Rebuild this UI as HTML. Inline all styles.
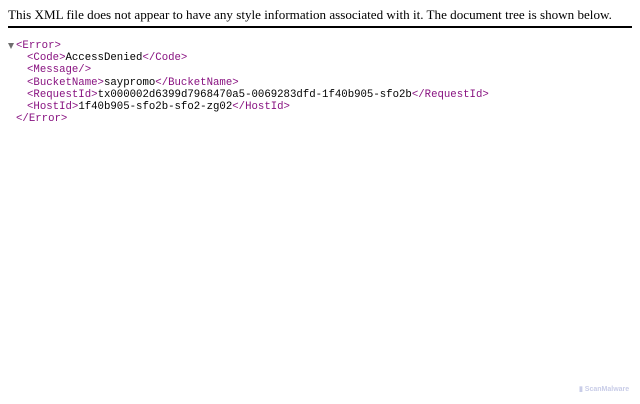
<!DOCTYPE html>
<html><head><style>
body{margin:0;background:#fff;width:640px;height:404px;position:relative;overflow:hidden}
.hdr{position:absolute;left:8px;top:7px;width:624px;font:13.1px "Liberation Serif",serif;color:#000;white-space:nowrap;border-bottom:2px solid #000;padding-bottom:3px;height:16px;line-height:16px}
.l{position:absolute;font:10.7px/12px "Liberation Mono",monospace;color:#000;white-space:pre}
.t{color:#881280}
.arr{position:absolute;left:8px;top:43px;width:0;height:0;border-left:3.5px solid transparent;border-right:3.5px solid transparent;border-top:6px solid #6e6e6e}
.wm{position:absolute;left:579px;top:385px;font:bold 7px "Liberation Sans",sans-serif;color:#c9cde8}
</style></head><body>
<div class="hdr">This XML file does not appear to have any style information associated with it. The document tree is shown below.</div>
<div class="arr"></div>
<div class="l" style="left:16px;top:40px"><span class="t">&lt;Error&gt;</span></div>
<div class="l" style="left:27px;top:52px"><span class="t">&lt;Code&gt;</span>AccessDenied<span class="t">&lt;/Code&gt;</span></div>
<div class="l" style="left:27px;top:64px"><span class="t">&lt;Message/&gt;</span></div>
<div class="l" style="left:27px;top:77px"><span class="t">&lt;BucketName&gt;</span>saypromo<span class="t">&lt;/BucketName&gt;</span></div>
<div class="l" style="left:27px;top:89px"><span class="t">&lt;RequestId&gt;</span>tx000002d6399d7968470a5-0069283dfd-1f40b905-sfo2b<span class="t">&lt;/RequestId&gt;</span></div>
<div class="l" style="left:27px;top:101px"><span class="t">&lt;HostId&gt;</span>1f40b905-sfo2b-sfo2-zg02<span class="t">&lt;/HostId&gt;</span></div>
<div class="l" style="left:16px;top:113px"><span class="t">&lt;/Error&gt;</span></div>
<div class="wm">▮ ScanMalware</div>
</body></html>
